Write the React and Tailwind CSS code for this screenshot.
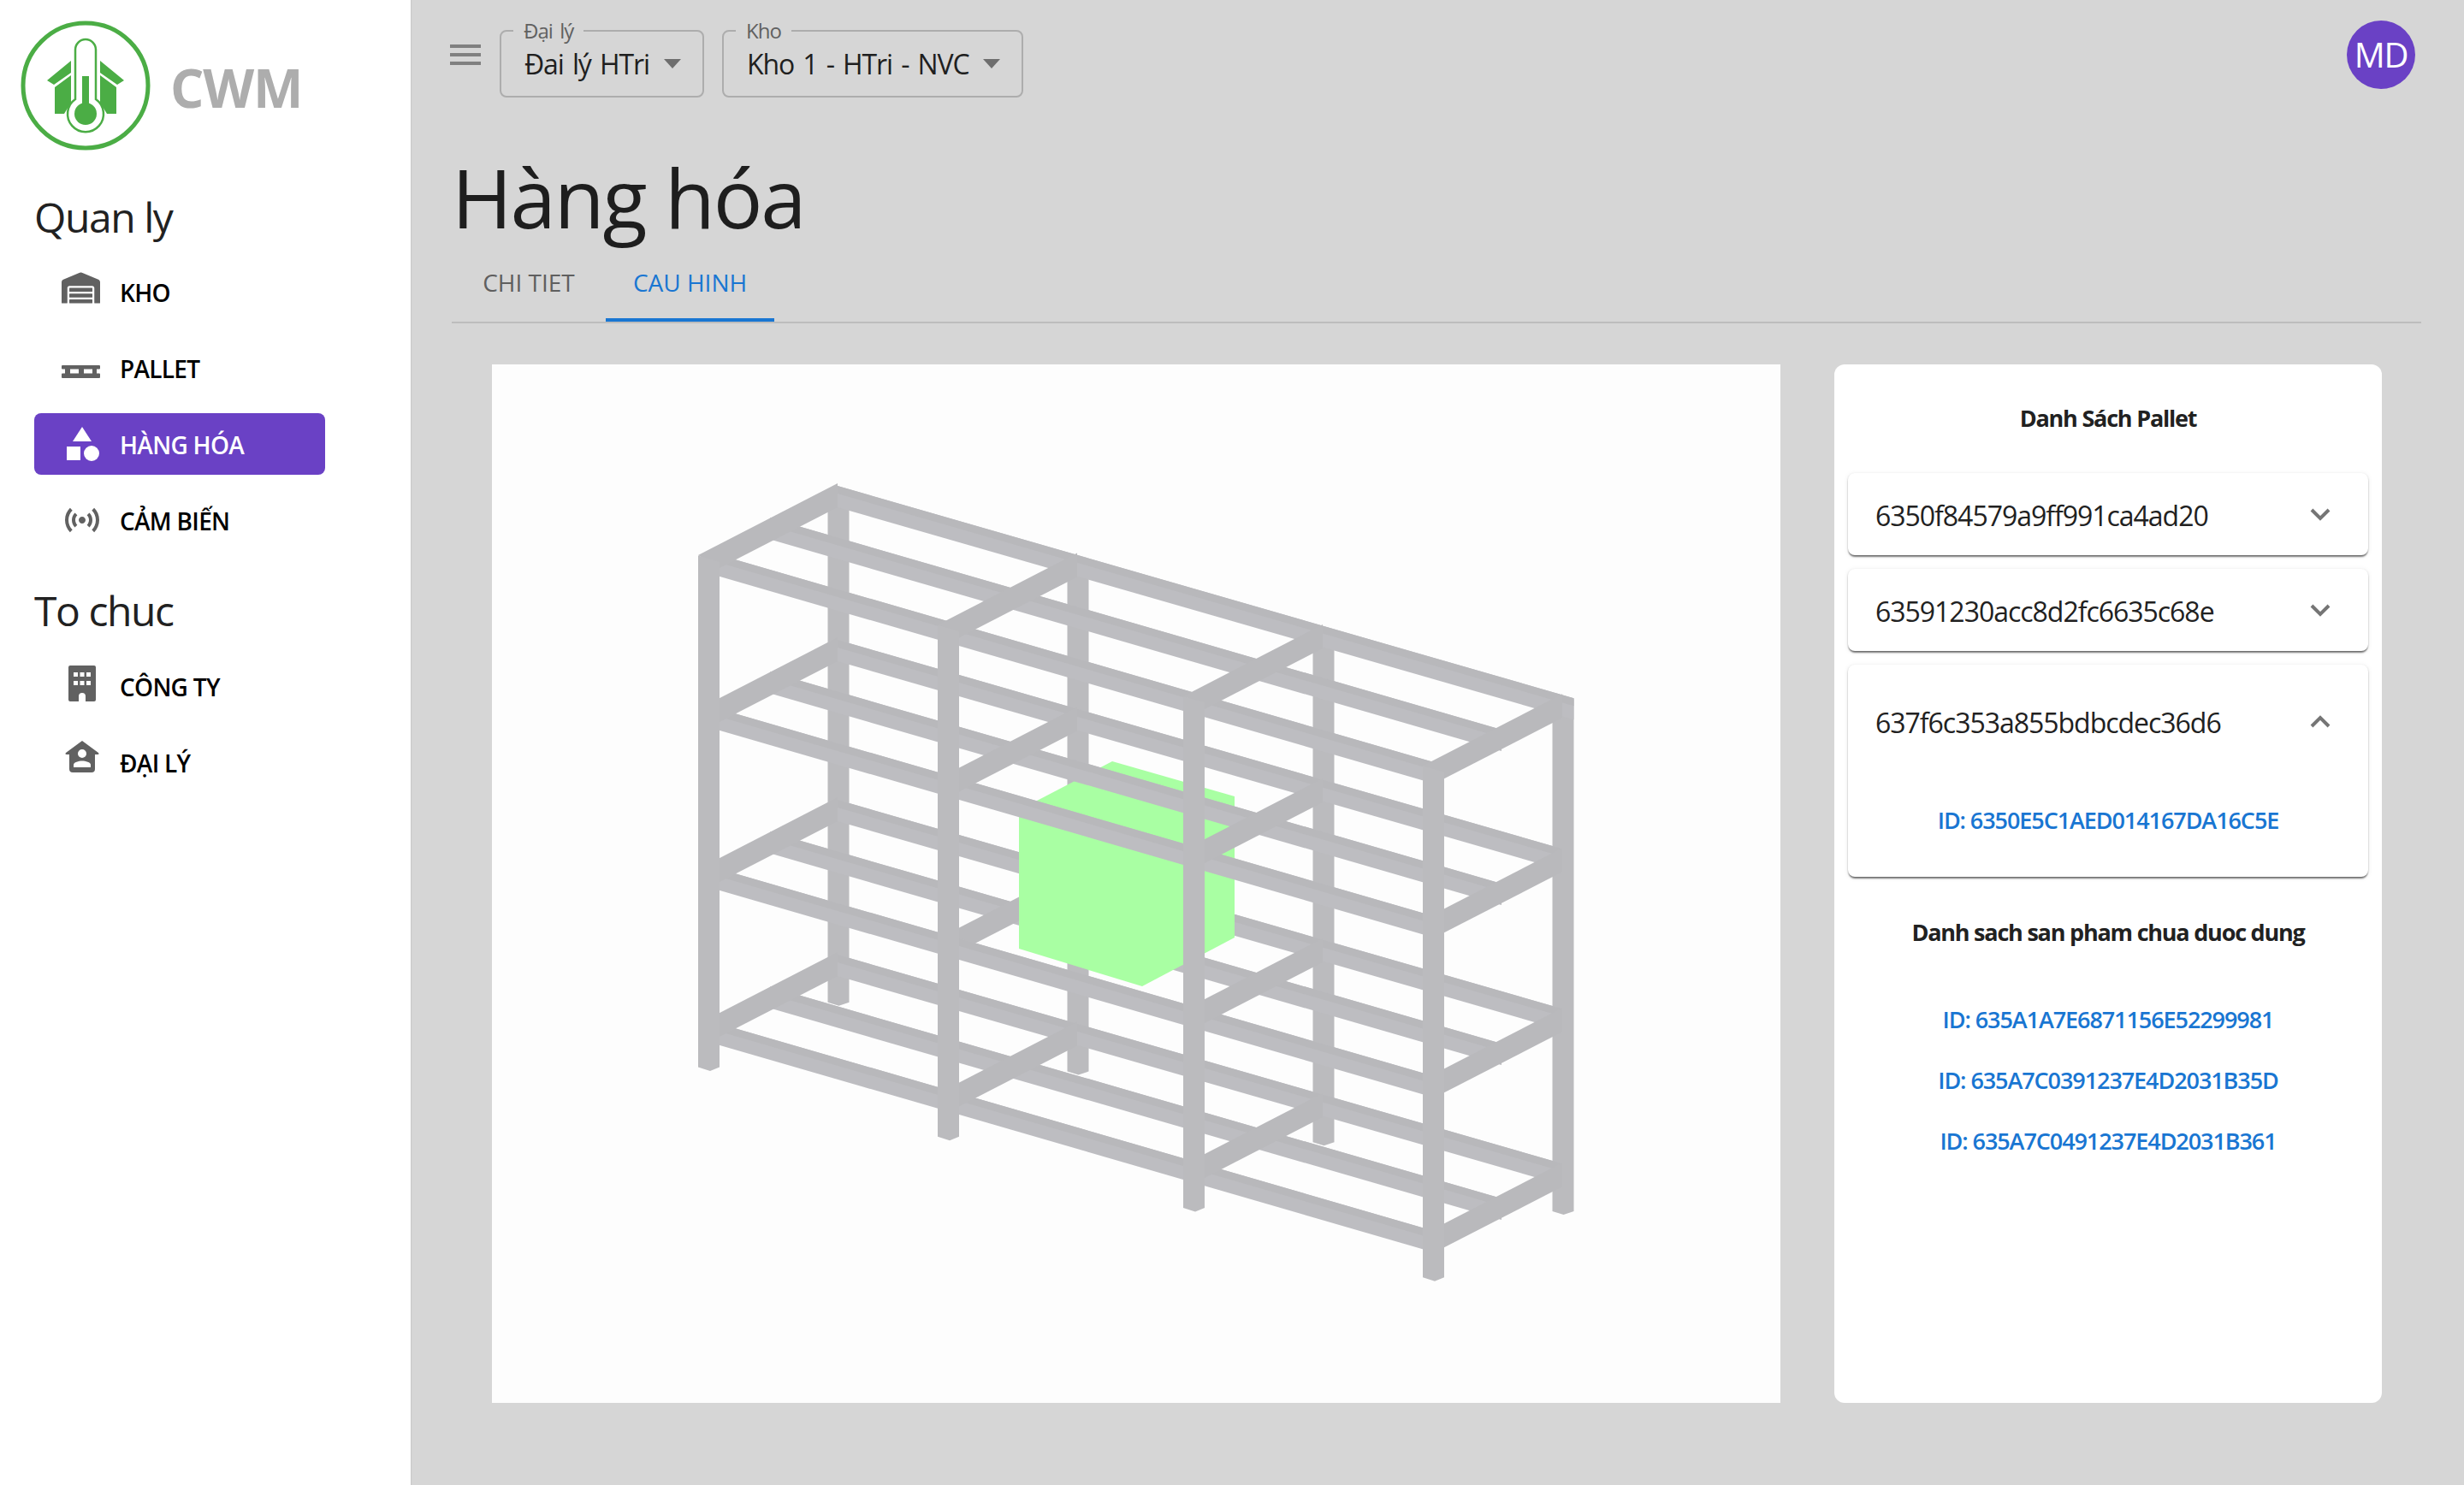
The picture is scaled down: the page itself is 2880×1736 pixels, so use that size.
import { FaWarehouse } from "react-icons/fa";

const font = { fontFamily: '"Open Sans", "Noto Sans", sans-serif' };

function Logo() {
  return (
    <svg width="200" height="200" viewBox="0 0 200 200" className="shrink-0">
      <circle cx="100" cy="100" r="73" fill="none" stroke="#4bad45" strokeWidth="5" />
      <path d="M55 94 83 71V85L63 99Z M145 94 117 71V85L137 99Z" fill="#4bad45" />
      <path d="M64 102 83 88V120L75 133H64Z M136 102 117 88V120L125 133H136Z" fill="#4bad45" />
      <path d="M88 116V58a12 12 0 0 1 24 0V116a21 21 0 1 1-24 0Z" fill="#fff" stroke="#4bad45" strokeWidth="2.5" />
      <rect x="96" y="89" width="8" height="36" fill="#4bad45" />
      <circle cx="100" cy="133" r="13" fill="#4bad45" />
    </svg>
  );
}

function SensorsIcon() {
  return (
    <svg width="48" height="48" viewBox="0 0 24 24" fill="currentColor">
      <path d="M7.76 16.24C6.67 15.16 6 13.66 6 12s.67-3.16 1.76-4.24l1.42 1.42C8.45 9.9 8 10.9 8 12c0 1.1.45 2.1 1.17 2.83l-1.41 1.41zm8.48 0C17.33 15.16 18 13.66 18 12s-.67-3.16-1.76-4.24l-1.42 1.42C15.55 9.9 16 10.9 16 12c0 1.1-.45 2.1-1.17 2.83l1.41 1.41zM12 10c-1.1 0-2 .9-2 2s.9 2 2 2 2-.9 2-2-.9-2-2-2zm8 2c0 2.21-.9 4.21-2.35 5.65l1.42 1.42C20.88 17.26 22 14.76 22 12s-1.12-5.26-2.93-7.07l-1.42 1.42C19.1 7.79 20 9.79 20 12zM6.35 6.35L4.93 4.93C3.12 6.74 2 9.24 2 12s1.12 5.26 2.93 7.07l1.42-1.42C4.9 16.21 4 14.21 4 12s.9-4.21 2.35-5.65z" />
    </svg>
  );
}

function BuildingIcon() {
  return (
    <svg width="32" height="42" viewBox="0 0 32 42" fill="currentColor">
      <path
        fillRule="evenodd"
        d="M2 0H30A2 2 0 0 1 32 2V40A2 2 0 0 1 30 42H20V36A4 4 0 0 0 12 36V42H2A2 2 0 0 1 0 40V2A2 2 0 0 1 2 0ZM6 8V13H11V8ZM13.500 8V13H18.500V8ZM21 8V13H26V8ZM6 18V23H11V18ZM13.500 18V23H18.500V18ZM21 18V23H26V18Z"
      />
    </svg>
  );
}

function PalletIcon() {
  return (
    <svg width="45" height="15" viewBox="0 0 45 15" fill="currentColor">
      <path
        fillRule="evenodd"
        d="M1 0H44A1 1 0 0 1 45 1V3.500A1 1 0 0 1 44 4.500H41V9.500H44A1 1 0 0 1 45 10.500V14A1 1 0 0 1 44 15H1A1 1 0 0 1 0 14V10.500A1 1 0 0 1 1 9.500H4V4.500H1A1 1 0 0 1 0 3.500V1A1 1 0 0 1 1 0ZM10 4.500V9.500H20V4.500ZM26 4.500V9.500H36V4.500Z"
      />
    </svg>
  );
}

function ShapesIcon() {
  return (
    <svg width="40" height="40" viewBox="0 0 40 40" fill="currentColor">
      <path d="M20 0 31 17H9Z" />
      <rect x="2" y="23" width="16" height="16" />
      <circle cx="31" cy="31" r="9" />
    </svg>
  );
}

function HouseUserIcon() {
  return (
    <svg width="40" height="37" viewBox="0 0 40 37" fill="currentColor">
      <path
        fillRule="evenodd"
        d="M20 0 39 14Q40.500 16 38 16H35V33A4 4 0 0 1 31 37H9A4 4 0 0 1 5 33V16H2Q-.5 16 1 14ZM20 10A5 5 0 1 0 20 20 5 5 0 1 0 20 10ZM10 31V28C10 25 16 23.500 20 23.500S30 25 30 28V31Z"
      />
    </svg>
  );
}

const navIcons = {
  kho: <FaWarehouse size={45} className="mb-[10px] mr-[3px]" />,
  pallet: <span className="mr-[3px] mt-[9px] flex"><PalletIcon /></span>,
  hang: <ShapesIcon />,
  cam: <SensorsIcon />,
  cong: <span className="mb-[6px] flex"><BuildingIcon /></span>,
  dai: <span className="mb-[13px] flex"><HouseUserIcon /></span>,
};

function NavItem({ icon, label, active }) {
  return (
    <div
      className={`flex h-[72px] items-center rounded-lg pl-8 text-[28px] font-semibold tracking-[-0.025em] ${
        active ? "bg-[#6a41c5] text-white" : "text-black"
      }`}
    >
      <span className={`flex w-12 items-center justify-center ${active ? "text-white" : "text-[#616161]"}`}>
        {navIcons[icon]}
      </span>
      <span className="ml-5 mt-[2px]">{label}</span>
    </div>
  );
}

function Select({ label, value, width }) {
  return (
    <div className={`relative flex h-[79px] items-center justify-between rounded-lg border-2 border-[#adadad] pl-[27px] pr-[25px] text-[32px] tracking-[-0.035em] [word-spacing:3px] text-[#1f1f1f] ${width}`}>
      <span className="absolute -top-[15px] left-[14px] bg-[#d6d6d6] px-3 text-[24px] leading-[28px] tracking-[-0.04em] text-[#616161]">
        {label}
      </span>
      <span>{value}</span>
      <svg width="20" height="11" viewBox="0 0 20 11" fill="#6e6e6e">
        <path d="M0 0H20L10 11Z" />
      </svg>
    </div>
  );
}

// rack is an orthographic box drawing, numbers are page pixels
const frontX = [816, 1096, 1383, 1663];
const depthX = 151.5;
const levels = [0, 180, 367, 548];
const F = (x) => 648.8 + 0.29 * (x - 840.8);
const R = (x) => 568 + 0.2885 * (x - 979);
const M = (x) => (F(x) + R(x)) / 2;

function LongBeam({ line, x1, x2, dy }) {
  const strip = (a, b, fill) => (
    <polygon
      fill={fill}
      points={`${x1},${line(x1) + dy + a} ${x2},${line(x2) + dy + a} ${x2},${line(x2) + dy + b} ${x1},${line(x1) + dy + b}`}
    />
  );
  return (
    <>
      {strip(0, 25, "#bdbdc1")}
      {strip(0, 9, "#b8b8bb")}
    </>
  );
}

function crossBeam(c, dy) {
  const x = frontX[c];
  const y = 649.1 + 0.2907 * (x - 816) + dy;
  return `${x},${y} ${x + 163},${y - 84} ${x + 163},${y - 56} ${x + 25},${y + 15}`;
}

function frontPost(x) {
  const b = F(x) + 606;
  return `${x},${F(x) + 8} ${x + 25},${F(x + 25) + 8} ${x + 25},${b} ${x + 14},${b + 4.500} ${x},${b}`;
}

function rearPost(x) {
  const b = R(x) + 607;
  return `${x},${R(x) + 9} ${x + 25},${R(x + 25) + 1} ${x + 25},${b} ${x + 13},${b + 4} ${x},${b}`;
}

function Rack() {
  return (
    <svg viewBox="575 426 1506 1214" className="block h-full w-full">
      <g fill="#bbbbbe">
        {frontX.map((x) => (
          <polygon key={x} points={rearPost(x + depthX)} />
        ))}
        {levels.map((dy) => (
          <LongBeam key={dy} line={R} x1={979} x2={dy === 0 ? 1839.5 : 1825} dy={dy} />
        ))}
        <LongBeam line={M} x1={900} x2={1755} dy={levels[2]} />
        <LongBeam line={M} x1={900} x2={1755} dy={levels[3]} />
        <polygon fill="#b9b9bc" points={crossBeam(1, levels[2])} />
      </g>
      <polygon fill="#a9ffa3" points="1191,947 1300,890 1443,931 1443,1096 1335,1153 1191,1109" />
      <g fill="#bbbbbe">
        <LongBeam line={M} x1={900} x2={1755} dy={levels[0]} />
        <LongBeam line={M} x1={900} x2={1755} dy={levels[1]} />
        {levels.map((dy) => (
          <LongBeam key={dy} line={F} x1={832} x2={1680} dy={dy} />
        ))}
        {frontX.map((x, i) =>
          levels.map((dy) =>
            i === 1 && dy === levels[2] ? null : (
              <polygon key={`${i}-${dy}`} fill="#b9b9bc" points={crossBeam(i, dy)} />
            )
          )
        )}
        {frontX.map((x) => (
          <polygon key={x} points={frontPost(x)} />
        ))}
      </g>
    </svg>
  );
}

function Accordion({ id, open }) {
  return (
    <div className="rounded-lg bg-white shadow-[0_3px_2px_-1px_rgba(0,0,0,0.45),0_1px_2px_0_rgba(0,0,0,0.25),0_1px_6px_0_rgba(0,0,0,0.08)]">
      <div className={`flex items-center justify-between pl-[32px] pr-[44px] text-[32px] tracking-[-0.032em] text-[#212121] ${open ? "h-[132px]" : "h-[96px]"}`}>
        <span className="mt-[3px]">{id}</span>
        <svg width="24" height="15" viewBox="0 0 24 15" fill="none" stroke="#757575" strokeWidth="4" className={open ? "rotate-180" : ""}>
          <path d="M2 2 12 12 22 2" />
        </svg>
      </div>
      {open && (
        <div className="h-[116px] pt-[30px] text-center text-[27px] font-semibold tracking-[-0.04em] text-[#1976d2]">
          ID: 6350E5C1AED014167DA16C5E
        </div>
      )}
    </div>
  );
}

export default function App() {
  const spare = ["635A1A7E6871156E52299981", "635A7C0391237E4D2031B35D", "635A7C0491237E4D2031B361"];

  return (
    <div className="flex h-[1736px] w-[2880px] overflow-hidden bg-[#d6d6d6]" style={font}>
      <aside className="w-[480px] shrink-0 bg-white px-10 shadow-[1px_0_1px_rgba(0,0,0,0.06)]">
        <div className="-ml-10 flex h-[200px] items-center">
          <Logo />
          <span className="-ml-px mt-[3px] text-[62px] font-bold leading-none tracking-[-0.02em] text-[#adadad]">CWM</span>
        </div>
        <h3 className="flex h-[105px] items-center pt-[3px] text-[48px] tracking-[-0.03em] text-[#212121]">Quan ly</h3>
        <div className="flex w-[340px] flex-col gap-[17px]">
          <NavItem icon="kho" label="KHO" />
          <NavItem icon="pallet" label="PALLET" />
          <NavItem icon="hang" label="HÀNG HÓA" active />
          <NavItem icon="cam" label="CẢM BIẾN" />
        </div>
        <h3 className="flex h-[122px] items-center pt-[18px] text-[48px] tracking-[-0.03em] text-[#212121]">To chuc</h3>
        <div className="flex w-[340px] flex-col gap-[17px]">
          <NavItem icon="cong" label="CÔNG TY" />
          <NavItem icon="dai" label="ĐẠI LÝ" />
        </div>
      </aside>

      <main className="min-w-0 flex-1">
        <header className="flex h-[172px] items-start pl-10 pr-[57px] pt-6">
          <svg width="48" height="48" viewBox="0 0 24 24" fill="#808080" className="mt-4 shrink-0">
            <path d="M3 18h18v-2H3v2zm0-5h18v-2H3v2zm0-7v2h18V6H3z" />
          </svg>
          <div className="ml-4 mt-[11px] flex gap-[21px]">
            <Select label="Đại lý" value="Đai lý HTri" width="w-[239px]" />
            <Select label="Kho" value="Kho 1 - HTri - NVC" width="w-[352px]" />
          </div>
          <div className="ml-auto flex h-20 w-20 items-center justify-center rounded-full bg-[#6a41c5] text-[40px] tracking-[-0.03em] text-white">
            MD
          </div>
        </header>

        <h1 className="ml-12 h-[116px] text-[96px] font-normal leading-[116px] tracking-[-0.023em] text-[#1e1e1e]">Hàng hóa</h1>

        <div className="ml-12 mr-[50px] flex h-[90px] border-b-2 border-[#bdbdbd] text-[28px] font-medium">
          <div className="flex h-[88px] w-[180px] items-center justify-center pb-1 text-[#5f5f5f]">CHI TIET</div>
          <div className="flex h-[88px] w-[197px] items-center justify-center border-b-4 border-[#1976d2] text-[#1976d2]">CAU HINH</div>
        </div>

        <div className="ml-[95px] mt-12 flex h-[1214px] gap-[63px]">
          <div className="w-[1506px] shrink-0 bg-[#fdfdfd]">
            <Rack />
          </div>
          <div className="flex w-[640px] shrink-0 flex-col rounded-xl bg-white px-4">
            <div className="flex h-[127px] items-center justify-center text-[27px] font-bold tracking-[-0.045em] text-[#212121]">
              Danh Sách Pallet
            </div>
            <div className="flex flex-col gap-4">
              <Accordion id="6350f84579a9ff991ca4ad20" />
              <Accordion id="63591230acc8d2fc6635c68e" />
              <Accordion id="637f6c353a855bdbcdec36d6" open />
            </div>
            <div className="flex h-[130px] items-center justify-center text-[27px] font-bold tracking-[-0.045em] text-[#212121]">
              Danh sach san pham chua duoc dung
            </div>
            <div className="mt-[-7px] flex flex-col gap-[31px] pt-[24px] text-center text-[27px] font-semibold leading-[40px] tracking-[-0.04em] text-[#1976d2]">
              {spare.map((id) => (
                <div key={id}>ID: {id}</div>
              ))}
            </div>
          </div>
        </div>
      </main>
    </div>
  );
}
